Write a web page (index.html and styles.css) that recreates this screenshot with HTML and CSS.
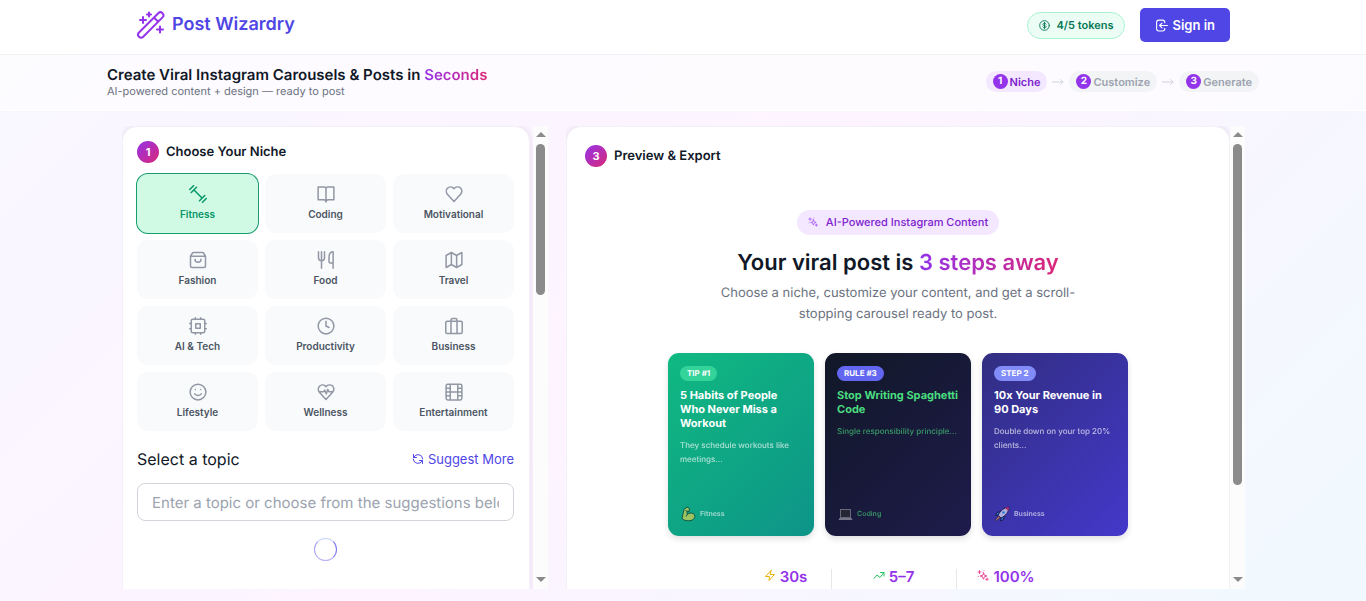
FILE: index.html
```html
<!DOCTYPE html>
<html lang="en">
<head>
<meta charset="utf-8">
<meta name="viewport" content="width=device-width, initial-scale=1">
<title>Post Wizardry</title>
<link rel="stylesheet" href="styles.css">
</head>
<body>
<svg class="sprite" aria-hidden="true">
  <symbol id="sparkles" viewBox="0 0 24 24"><path d="M13 6.500l1.700 4.800 4.800 1.700-4.800 1.700L13 19.500l-1.700-4.800L6.500 13l4.800-1.700z"/><path d="M5 2v6M2 5h6M20 17v5M17.500 19.500h5M14 2.500h.01M2.500 14h.01"/></symbol>
</svg>
<header class="topbar">
  <div class="topbar-inner">
    <a class="brand" href="#">
      <svg class="icon brand-icon" viewBox="0 0 28 28"><path d="M2 21.500 21.300 2.200a2.900 2.900 0 0 1 4.200 4.200L6.200 25.700a2.900 2.900 0 0 1-4.200-4.200zM17 6.500l4.200 4.200M6 6v6M3 9h6M12 1.500v4M10 3.500h4M23 15.500v6M20 18.500h6"/></svg>
      <span>Post Wizardry</span>
    </a>
    <div class="account">
      <span class="tokens">
        <svg class="icon icon-token" viewBox="0 0 24 24"><circle cx="12" cy="12" r="10.500"/><path d="M15.500 9c-.5-1.200-1.800-1.800-3.500-1.800-2 0-3.500.8-3.500 2.400 0 3.600 7 1.400 7 4.900 0 1.500-1.500 2.300-3.500 2.300-1.700 0-3-.6-3.500-1.800M12 5v14"/></svg>
        4/5 tokens
      </span>
      <button class="signin" type="button">
        <svg class="icon icon-signin" viewBox="0 0 24 24"><path d="M18 7V6a4 4 0 0 0-4-4H7a4 4 0 0 0-4 4v12a4 4 0 0 0 4 4h7a4 4 0 0 0 4-4v-1M23 12H9M13 7.500 8.500 12l4.500 4.500"/></svg>
        Sign in
      </button>
    </div>
  </div>
</header>
<section class="intro">
  <div class="intro-inner">
    <div>
      <h1 class="intro-title">Create Viral Instagram Carousels &amp; Posts in <span class="gradient-text">Seconds</span></h1>
      <p class="intro-sub">AI-powered content + design — ready to post</p>
    </div>
    <ol class="steps">
      <li class="step active"><span class="step-no">1</span>Niche</li>
      <li class="arrow" aria-hidden="true"><svg class="icon" viewBox="0 0 12 8"><path d="M0 4h11M8.500 1.500 11 4 8.500 6.500"/></svg></li>
      <li class="step"><span class="step-no">2</span>Customize</li>
      <li class="arrow" aria-hidden="true"><svg class="icon" viewBox="0 0 12 8"><path d="M0 4h11M8.500 1.500 11 4 8.500 6.500"/></svg></li>
      <li class="step"><span class="step-no">3</span>Generate</li>
    </ol>
  </div>
</section>
<main class="workspace">
  <div class="panel">
    <div class="viewport viewport-form">
      <section class="card form-card">
        <h2 class="card-title"><span class="badge-no">1</span>Choose Your Niche</h2>
        <div class="niches">
          <button type="button" class="niche selected"><svg class="icon" viewBox="0 0 24 24"><path d="m7 7 10 10M3 10l7-7M1 6l5-5M14 21l7-7M18 23l5-5"/></svg>Fitness</button>
          <button type="button" class="niche"><svg class="icon" viewBox="0 0 24 24"><path d="M12 5c0-1.500-1-2.500-2.500-2.500H1.500v17H9c2 0 3 1 3 3 0-2 1-3 3-3h7.500v-17h-8C13 2.500 12 3.500 12 5zM12 5v17.500"/></svg>Coding</button>
          <button type="button" class="niche"><svg class="icon" viewBox="0 0 24 24"><path d="M20.800 4.100a5.800 5.800 0 0 0-8 0L12 5l-.8-.9a5.700 5.700 0 0 0-8 8.100L12 22l8.800-9.800a5.700 5.700 0 0 0 0-8.100z"/></svg>Motivational</button>
          <button type="button" class="niche"><svg class="icon" viewBox="0 0 24 24"><path d="M2 7v13a2 2 0 0 0 2 2h16a2 2 0 0 0 2-2V7l-2.500-4a2 2 0 0 0-1.500-1H6a2 2 0 0 0-1.500 1zM2 7h20M16 11a4 4 0 0 1-8 0"/></svg>Fashion</button>
          <button type="button" class="niche"><svg class="icon" viewBox="0 0 24 24"><path d="M6 1v22M2 1v8a4 4 0 0 0 8 0V1M21.500 23V1c-3 0-5.500 3-5.500 8v5a2 2 0 0 0 2 2h3.500"/></svg>Food</button>
          <button type="button" class="niche"><svg class="icon" viewBox="0 0 24 24"><path d="M1.500 6v16l7-4 7 4 7-4V2l-7 4-7-4zM8.500 2v16M15.500 6v16"/></svg>Travel</button>
          <button type="button" class="niche"><svg class="icon" viewBox="0 0 24 24"><rect x="3" y="3" width="18" height="18" rx="2"/><path d="M9 9h6v6H9zM8.500 1v2M15.500 1v2M8.500 21v2M15.500 21v2M1 8.500h2M1 15.500h2M21 8.500h2M21 15.500h2"/></svg>AI &amp; Tech</button>
          <button type="button" class="niche"><svg class="icon" viewBox="0 0 24 24"><circle cx="12" cy="12" r="10.500"/><path d="M12 5.500V12l4 2"/></svg>Productivity</button>
          <button type="button" class="niche"><svg class="icon" viewBox="0 0 24 24"><rect x="1" y="5.500" width="22" height="16.500" rx="2"/><path d="M8 22V4a2 2 0 0 1 2-2h4a2 2 0 0 1 2 2v18"/></svg>Business</button>
          <button type="button" class="niche"><svg class="icon" viewBox="0 0 24 24"><circle cx="12" cy="12" r="10.500"/><path d="M7.500 14.500s1.500 2 4.500 2 4.500-2 4.500-2M8.500 8.500h.01M15.500 8.500h.01"/></svg>Lifestyle</button>
          <button type="button" class="niche"><svg class="icon" viewBox="0 0 24 24"><path d="M20.800 4.100a5.800 5.800 0 0 0-8 0L12 5l-.8-.9a5.700 5.700 0 0 0-8 8.100L12 22l8.800-9.800a5.700 5.700 0 0 0 0-8.100zM2.500 11.500H9l1.200-2 2.300 5 1.800-6 1.500 3h5.700"/></svg>Wellness</button>
          <button type="button" class="niche"><svg class="icon" viewBox="0 0 24 24"><rect x="1.500" y="1.500" width="21" height="21" rx="2.200"/><path d="M7 2v20M17 2v20M2 12h20M2 7h5M2 17h5M17 7h5M17 17h5"/></svg>Entertainment</button>
        </div>
        <div class="topic-head">
          <label for="topic">Select a topic</label>
          <button type="button" class="suggest"><svg class="icon" viewBox="0 0 24 24"><path d="M3 3v6h6M3.500 8.500A9.500 9.500 0 0 1 21.500 12M21 21v-6h-6M20.500 15.500A9.500 9.500 0 0 1 2.500 12"/></svg>Suggest More</button>
        </div>
        <input class="topic" id="topic" type="text" placeholder="Enter a topic or choose from the suggestions below">
        <div class="spinner" role="status" aria-label="Loading"></div>
      </section>
    </div>
    <div class="scrollbar" aria-hidden="true"><i class="up"></i><div class="track"><div class="thumb thumb-form"></div></div><i class="down"></i></div>
  </div>
  <div class="panel">
    <div class="viewport">
      <section class="card preview-card">
        <h2 class="card-title"><span class="badge-no">3</span>Preview &amp; Export</h2>
        <div class="hero">
          <span class="pill"><svg class="icon"><use href="#sparkles"/></svg>AI-Powered Instagram Content</span>
          <h3 class="hero-title">Your viral post is <span class="gradient-text">3 steps away</span></h3>
          <p class="hero-sub">Choose a niche, customize your content, and get a scroll-stopping carousel ready to post.</p>
          <div class="samples">
            <article class="sample fitness">
              <span class="tag">TIP #1</span>
              <h4>5 Habits of People Who Never Miss a Workout</h4>
              <p>They schedule workouts like meetings...</p>
              <footer><svg viewBox="0 0 16 16"><path d="M2 12.500 4 3.500 7 1l2.500 1.500-.5 3-2-.2.200 3.200c2-2 6-2 7.300.5 1 2.500-.5 4.500-3.500 5.500-3 .6-7 .4-9-2z" fill="#ffd84a" stroke="#10261c"/><path d="M7 5.300 5.500 4.500M7.200 8.500 6 10.500" fill="none" stroke="#10261c"/></svg>Fitness</footer>
            </article>
            <article class="sample coding">
              <span class="tag">RULE #3</span>
              <h4>Stop Writing Spaghetti Code</h4>
              <p>Single responsibility principle...</p>
              <footer><svg viewBox="0 0 16 16"><rect x="3.500" y="3.500" width="10" height="8" fill="#303030" stroke="#9a9ca4"/><path d="M2.500 12h12l1 2h-14z" fill="#b4b6be"/></svg>Coding</footer>
            </article>
            <article class="sample business">
              <span class="tag">STEP 2</span>
              <h4>10x Your Revenue in 90 Days</h4>
              <p>Double down on your top 20% clients...</p>
              <footer><svg viewBox="0 0 16 16"><path d="M6.500 5.500 3 6.500 1.500 9.500l3-.5zM10.500 9.500l-1 4-3 1.500.5-3z" fill="#1fb6f0" stroke="#080a18"/><path d="M4 9.500c2-4.500 6-8 11-8.500 0 5-3.500 9-8 11z" fill="#fff" stroke="#080a18"/><path d="m11 1.800 4-.8-.7 4z" fill="#ff2040"/><circle cx="9.500" cy="6.500" r="1.300" fill="#1fb6f0"/><path d="m4.500 10 1.800 1.800L2 15l-.8-.8z" fill="#ff9d2e" stroke="#080a18" stroke-width=".6"/></svg>Business</footer>
            </article>
          </div>
          <div class="stats">
            <div class="stat stat-a"><svg class="icon amber" viewBox="0 0 24 24"><path d="M14 2 3 14h8l-1 8 11-12h-8z"/></svg>30s</div>
            <div class="stat stat-b"><svg class="icon green" viewBox="0 0 24 24"><path d="m2 18 6-7 6 5 8-10M15 6h7v7"/></svg>5–7</div>
            <div class="stat stat-c"><svg class="icon pink"><use href="#sparkles"/></svg>100%</div>
          </div>
        </div>
      </section>
    </div>
    <div class="scrollbar" aria-hidden="true"><i class="up"></i><div class="track"><div class="thumb thumb-preview"></div></div><i class="down"></i></div>
  </div>
</main>
</body>
</html>
```

FILE: styles.css
```css
* { box-sizing: border-box; }
h1, h2, h3, h4, p, ol { margin: 0; padding: 0; }
button { font: inherit; border: 0; background: none; padding: 0; cursor: pointer; }
body {
  margin: 0;
  height: 100vh;
  display: flex;
  flex-direction: column;
  overflow: hidden;
  font-family: Inter, "Liberation Sans", sans-serif;
  font-size: 15px;
  text-rendering: geometricPrecision;
  color: #111827;
  background: linear-gradient(135deg, #f8f7ff 0%, #fdf4ff 50%, #f0f9ff 100%);
}
.sprite { position: absolute; width: 0; height: 0; }
.icon {
  flex: none;
  fill: none;
  stroke: currentColor;
  stroke-width: 2;
  stroke-linecap: round;
  stroke-linejoin: round;
}
.gradient-text {
  background: linear-gradient(90deg, #9333ea, #db2777);
  -webkit-background-clip: text;
  background-clip: text;
  color: transparent;
}

.topbar { background: #fff; border-bottom: 1px solid #f0f1f5; }
.topbar-inner {
  max-width: 1152px;
  height: 54px;
  margin: 0 auto;
  padding: 0 29px 4px 30px;
  display: flex;
  align-items: center;
  justify-content: space-between;
}
.brand {
  display: flex;
  align-items: center;
  gap: 7px;
  color: #4f46e5;
  font-size: 18px;
  line-height: 24px;
  font-weight: 600;
  text-decoration: none;
}
.brand-icon { width: 28px; height: 28px; color: #9333ea; stroke-width: 2; }
.account { display: flex; align-items: center; gap: 15px; }
.tokens {
  display: flex;
  align-items: center;
  gap: 6px;
  height: 27px;
  padding: 0 11px;
  border: 1px solid #a7f3d0;
  border-radius: 14px;
  background: #ecfdf5;
  color: #047857;
  font-size: 11px;
  font-weight: 600;
}
.icon-token { width: 11px; height: 11px; }
.signin {
  display: flex;
  align-items: center;
  gap: 4px;
  height: 34px;
  padding: 0 15px;
  border-radius: 5px;
  background: #4f46e5;
  color: #fff;
  font-size: 13px;
  font-weight: 600;
}
.icon-signin { width: 13px; height: 13px; }

.intro { background: rgba(255, 255, 255, .6); border-bottom: 1px solid #fff; }
.intro-inner {
  max-width: 1152px;
  height: 55px;
  margin: 0 auto;
  padding-bottom: 2px;
  display: flex;
  align-items: center;
  justify-content: space-between;
}
.intro-title { font-size: 15px; line-height: 19px; font-weight: 600; }
.intro-sub { font-size: 11px; line-height: 15px; color: #6b7280; }
.steps { display: flex; align-items: center; gap: 5px; list-style: none; }
.step {
  display: flex;
  align-items: center;
  gap: 2px;
  height: 21px;
  padding: 0 7px;
  border-radius: 11px;
  background: #f3f4f6;
  color: #9ca3af;
  font-size: 11px;
  font-weight: 600;
}
.step.active { background: #f3e8ff; color: #7e22ce; }
.step-no {
  width: 15px;
  height: 15px;
  border-radius: 50%;
  background: #9333ea;
  color: #fff;
  font-size: 10px;
  line-height: 15px;
  font-weight: 700;
  text-align: center;
}
.arrow { display: flex; color: #d1d5db; }
.arrow .icon { width: 12px; height: 8px; stroke-width: 1; }

.workspace {
  flex: 1;
  min-height: 0;
  width: 100%;
  max-width: 1152px;
  margin: 0 auto;
  padding: 15px 14px 12px 15px;
  display: grid;
  grid-template-columns: 426fr 679fr;
  gap: 18px;
}
.panel { display: flex; min-width: 0; min-height: 0; }
.viewport { flex: 1; min-width: 0; overflow: hidden; }
.viewport-form { padding-right: 3px; }
.card {
  min-height: calc(100% + 24px);
  border: 1px solid #f3f0f8;
  border-radius: 15px;
  background: #fff;
  box-shadow: 0 0 6px rgba(88, 28, 135, .12);
}
.form-card { padding: 14px 15px 14px 14px; }
.preview-card { padding: 18px; }
.card-title {
  display: flex;
  align-items: center;
  gap: 7px;
  font-size: 13px;
  line-height: 22px;
  font-weight: 600;
}
.badge-no {
  width: 22px;
  height: 22px;
  border-radius: 50%;
  background: linear-gradient(135deg, #9333ea, #db2777);
  color: #fff;
  font-size: 11px;
  font-weight: 700;
  text-align: center;
}
.niches {
  display: grid;
  grid-template-columns: repeat(3, 1fr);
  gap: 7px;
  margin-top: 11px;
}
.niche {
  display: flex;
  flex-direction: column;
  align-items: center;
  gap: 5px;
  padding: 11px 4px 12px;
  border-radius: 11px;
  background: #f9fafb;
  color: #4b5563;
  font-size: 10px;
  line-height: 13px;
  font-weight: 600;
}
.niche .icon { width: 18px; height: 18px; color: #9297a5; }
.niche.selected { background: #d1fae5; color: #059669; box-shadow: 0 0 0 1px #169c6e; }
.niche.selected .icon { color: #059669; }
.topic-head {
  display: flex;
  justify-content: space-between;
  align-items: center;
  margin-top: 18px;
  font-size: 16px;
  line-height: 20px;
}
.suggest { display: flex; align-items: center; gap: 4px; color: #4f46e5; font-size: 13px; }
.suggest .icon { width: 12px; height: 12px; }
.topic {
  display: block;
  width: 100%;
  height: 38px;
  margin-top: 14px;
  padding: 0 14px;
  border: 1px solid #d1d5db;
  border-radius: 8px;
  background: #fff;
  font: 15px Inter, "Liberation Sans", sans-serif;
  text-rendering: inherit;
}
.topic::placeholder { color: #9ca3af; }
.spinner {
  width: 23px;
  height: 23px;
  margin: 17px auto 0;
  border: 1px solid #7d76ee;
  border-left-color: #a5a0f2;
  border-top-color: #c7d2fe;
  border-bottom-color: #b9b5f5;
  border-radius: 50%;
}

.scrollbar {
  flex: none;
  width: 15px;
  padding: 6px 3px 7px;
  display: flex;
  flex-direction: column;
  align-items: center;
  background: #fcfcfc;
}
.up, .down { border: solid transparent; border-width: 0 5px; }
.up { border-bottom: 5px solid #8b8b8b; }
.down { border-top: 5px solid #8b8b8b; }
.track { flex: 1; width: 9px; padding: 7px 0; }
.thumb { border-radius: 5px; background: #8b8b8b; }
.thumb-form { height: 35.5%; }
.thumb-preview { height: 80%; }

.hero { display: flex; flex-direction: column; align-items: center; padding-top: 43px; }
.pill {
  display: flex;
  align-items: center;
  gap: 8px;
  height: 25px;
  padding: 0 11px 2px;
  border-radius: 13px;
  background: #f3e8ff;
  color: #7e22ce;
  font-size: 11px;
  font-weight: 500;
}
.pill .icon { width: 10px; height: 10px; color: #a855f7; }
.hero-title { margin-top: 14px; font-size: 22px; line-height: 28px; font-weight: 600; }
.hero-sub {
  max-width: 360px;
  margin-top: 6px;
  color: #6b7280;
  font-size: 13px;
  line-height: 21px;
  text-align: center;
}
.samples { display: flex; gap: 11px; margin-top: 28px; }
.sample {
  width: 146px;
  aspect-ratio: 4 / 5;
  padding: 13px 12px 14px;
  display: flex;
  flex-direction: column;
  align-items: flex-start;
  border-radius: 11px;
  box-shadow: 0 3px 6px rgba(0, 0, 0, .12);
  color: #fff;
}
.sample.fitness { background: linear-gradient(135deg, #10b981, #0d9488); }
.sample.coding { background: linear-gradient(135deg, #111827, #1e1b4b); }
.sample.business { background: linear-gradient(135deg, #312e81, #4338ca); }
.tag {
  padding: 0 7px;
  border-radius: 8px;
  font-size: 8px;
  line-height: 15px;
  font-weight: 700;
}
.fitness .tag { background: #34d399; }
.coding .tag { background: #6366f1; }
.business .tag { background: #818cf8; }
.sample h4 { margin-top: 7px; font-size: 11px; line-height: 14px; font-weight: 700; }
.sample p { margin-top: 8px; font-size: 8px; line-height: 14px; font-weight: 500; opacity: .65; }
.coding h4, .coding p, .coding footer { color: #4ade80; }
.sample footer {
  display: flex;
  align-items: center;
  gap: 4px;
  margin-top: auto;
  font-size: 7px;
  line-height: 16px;
  font-weight: 600;
  opacity: .6;
}
.sample footer svg { width: 16px; height: 16px; }
.stats { display: flex; margin-top: 33px; }
.stat {
  display: flex;
  justify-content: center;
  gap: 4px;
  height: 44px;
  font-size: 15px;
  line-height: 15px;
  font-weight: 600;
  color: #9333ea;
}
.stat + .stat { border-left: 1px solid #e5e7eb; }
.stat-a { width: 90px; }
.stat-b { width: 125px; }
.stat-c { width: 100px; }
.stat .icon { width: 12px; height: 13px; }
.stat .amber { color: #eab308; }
.stat .green { color: #22c55e; }
.stat .pink { color: #ec4899; }
```
